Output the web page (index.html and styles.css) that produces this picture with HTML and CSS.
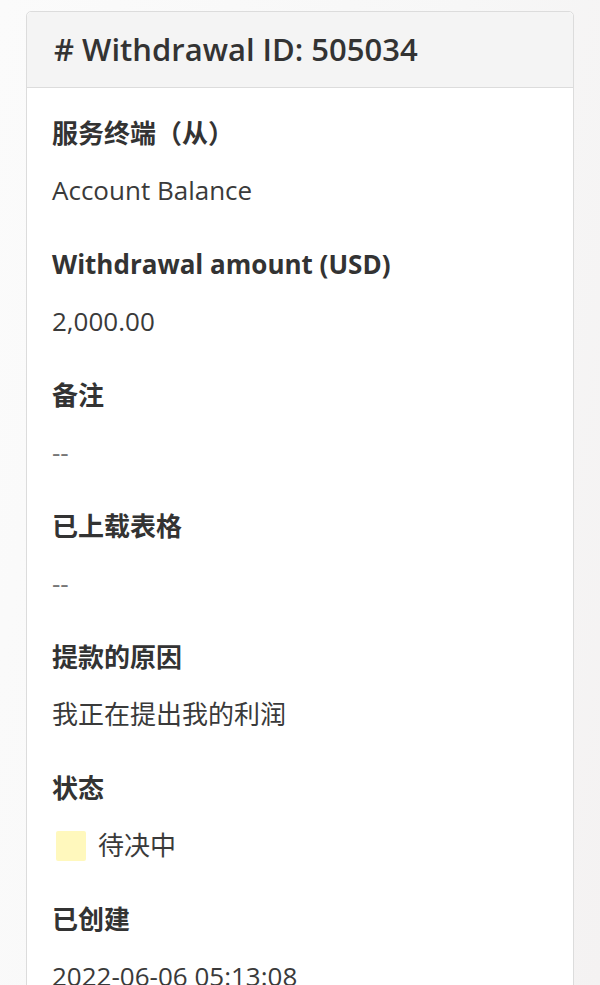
FILE: index.html
```html
<!DOCTYPE html>
<html lang="zh">
<head>
<meta charset="utf-8">
<title>Withdrawal</title>
<link rel="stylesheet" href="styles.css">
</head>
<body>
<div class="page">
  <div class="card">
    <div class="card-header">
      <h1 class="card-title"># Withdrawal ID: 505034</h1>
    </div>
    <div class="card-body">
      <div class="field">
        <div class="label">服务终端（从）</div>
        <div class="value">Account Balance</div>
      </div>
      <div class="field">
        <div class="label">Withdrawal amount (USD)</div>
        <div class="value">2,000.00</div>
      </div>
      <div class="field">
        <div class="label">备注</div>
        <div class="value muted">--</div>
      </div>
      <div class="field">
        <div class="label">已上载表格</div>
        <div class="value muted">--</div>
      </div>
      <div class="field">
        <div class="label">提款的原因</div>
        <div class="value">我正在提出我的利润</div>
      </div>
      <div class="field">
        <div class="label">状态</div>
        <div class="value status"><span class="swatch"></span><span>待决中</span></div>
      </div>
      <div class="field">
        <div class="label">已创建</div>
        <div class="value">2022-06-06 05:13:08</div>
      </div>
    </div>
  </div>
</div>
</body>
</html>
```
FILE: styles.css
```css
* { box-sizing: border-box; }
html, body { margin: 0; padding: 0; }
body {
  font-family: "Open Sans", "Noto Sans CJK SC", sans-serif;
  color: #333;
  background: linear-gradient(100deg, #fbfbfb 0%, #f7f7f7 60%, #f4f2f2 100%);
  height: 985px;
  overflow: hidden;
}
.page {
  padding: 11px 26px 0 26px;
}
.card {
  background: #fff;
  border: 1px solid #dcdcdc;
  border-radius: 5px;
  height: 1100px;
}
.card-header {
  background: #f4f4f4;
  border-bottom: 1px solid #dcdcdc;
  border-radius: 5px 5px 0 0;
  padding: 19px 20px 19px 27px;
}
.card-title {
  margin: 0;
  font-size: 31px;
  line-height: 37px;
  font-weight: 600;
  color: #333;
}
.card-body {
  padding: 26px 25px 0 25px;
}
.field { margin-bottom: 35px; }
.label {
  font-size: 26px;
  line-height: 39px;
  font-weight: 700;
  color: #333;
  margin-bottom: 18px;
}
.value {
  font-size: 26px;
  line-height: 39px;
  font-weight: 400;
  color: #3a3a3a;
}
.value.muted { color: #777; }
.status {
  display: flex;
  align-items: center;
  gap: 12px;
}
.swatch {
  display: inline-block;
  width: 30px;
  height: 30px;
  border-radius: 2px;
  background: #fff8bd;
  margin-left: 4px;
}
```
